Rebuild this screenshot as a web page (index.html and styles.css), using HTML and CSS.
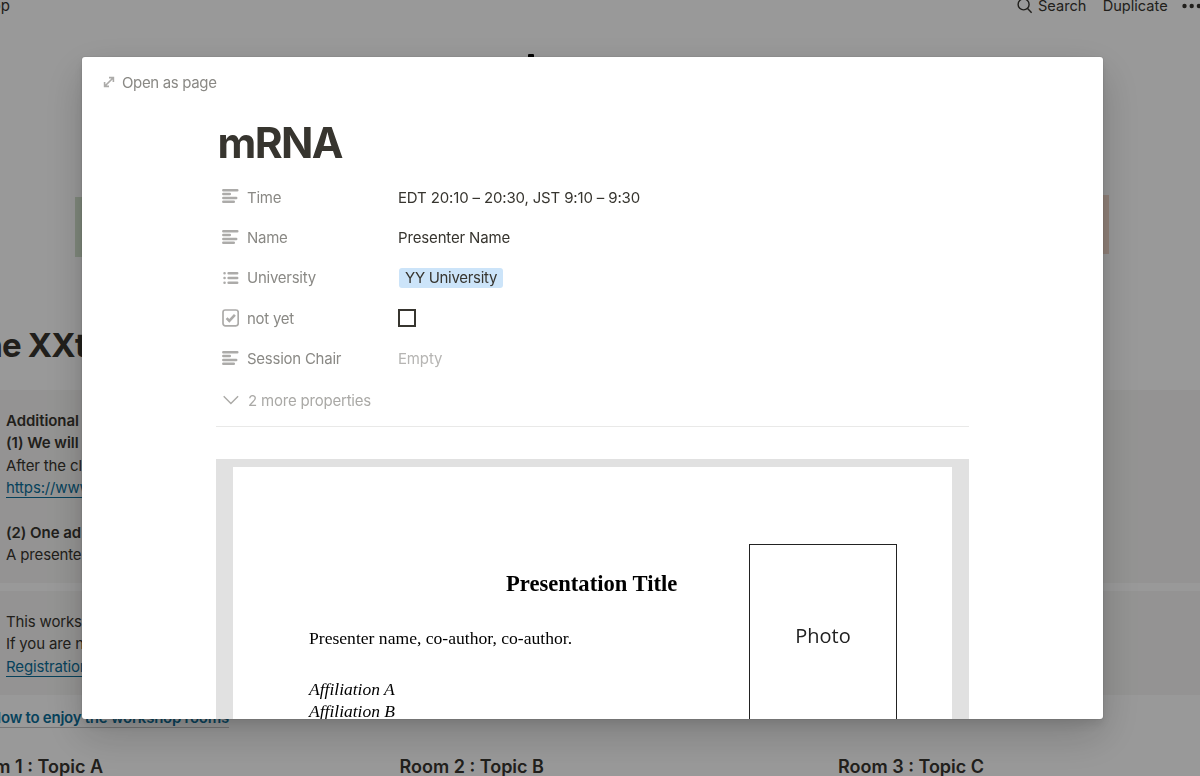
FILE: index.html
```html
<!DOCTYPE html>
<html lang="en">
<head>
    <meta charset="UTF-8">
    <meta name="viewport" content="width=device-width, initial-scale=1.0">
    <title>mRNA</title>
    <link rel="stylesheet" href="styles.css">
</head>
<body>
    <div class="page">
        <header class="topbar">
            <div class="breadcrumb">Workshop</div>
            <nav class="topbar-actions">
                <svg class="search-icon" viewBox="0 0 16 16"><circle cx="6.6" cy="6.4" r="5.5"/><path d="M10.6 10.6L14.6 14.8"/></svg>
                <span class="search-label">Search</span>
                <span class="duplicate-label">Duplicate</span>
                <svg class="more-icon" viewBox="0 0 18 6"><circle cx="2.5" cy="3" r="2.2"/><circle cx="9.7" cy="3" r="2.2"/><circle cx="16.9" cy="3" r="2.2"/></svg>
            </nav>
        </header>

        <div class="banner">
            <span class="banner-mark"></span>
            <div class="banner-green"></div>
            <div class="banner-orange"></div>
        </div>

        <h2 class="page-heading"><span>the XXth</span></h2>

        <section class="callout callout-first">
            <p><b>Additional</b></p>
            <p><b>(1) We will</b></p>
            <p>After the cl</p>
            <p><a>https://www</a></p>
            <p>&nbsp;</p>
            <p><b>(2) One ad</b></p>
            <p>A presenter</p>
        </section>
        <section class="callout">
            <p>This worksh</p>
            <p>If you are n</p>
            <p><a>Registration</a></p>
        </section>

        <div class="guide-link"><a>How to enjoy the workshop rooms</a></div>

        <div class="rooms">
            <h3 class="room-first"><span>Room 1 : Topic A</span></h3>
            <h3 class="room-second">Room 2 : Topic B</h3>
            <h3>Room 3 : Topic C</h3>
        </div>
    </div>

    <div class="overlay">
        <div class="modal">
            <div class="modal-bar">
                <svg class="expand-icon" viewBox="0 0 12 12"><path d="M2.5 9.5L9.5 2.5M6 1.6H10.4V6M1.6 6V10.4H6"/></svg>
                <span>Open as page</span>
            </div>

            <div class="modal-content">
                <h1>mRNA</h1>

                <div class="properties">
                    <div class="property">
                        <svg class="property-icon" viewBox="0 0 18 18"><path d="M2.3 2.3H16.3M2.3 6.1H8.8M2.3 9.9H15.2M2.3 13.7H12.8"/></svg>
                        <span class="property-name">Time</span>
                        <span class="property-value">EDT 20:10 – 20:30, JST 9:10 – 9:30</span>
                    </div>
                    <div class="property">
                        <svg class="property-icon" viewBox="0 0 18 18"><path d="M2.3 2.3H16.3M2.3 6.1H8.8M2.3 9.9H15.2M2.3 13.7H12.8"/></svg>
                        <span class="property-name">Name</span>
                        <span class="property-value">Presenter Name</span>
                    </div>
                    <div class="property">
                        <svg class="property-icon" viewBox="0 0 18 18"><path d="M7.6 4.2H16.2M7.6 9H16.2M7.6 13.8H16.2M3.5 4.2H3.6M3.5 9H3.6M3.5 13.8H3.6"/></svg>
                        <span class="property-name">University</span>
                        <span class="property-value"><span class="tag">YY University</span></span>
                    </div>
                    <div class="property">
                        <svg class="property-icon check-icon" viewBox="0 0 18 18"><rect x="2" y="1" width="15.2" height="15.8" rx="2.3"/><path class="tick" d="M5.6 9.1L8.3 11.8L13.9 5.8"/></svg>
                        <span class="property-name">not yet</span>
                        <span class="property-value"><span class="checkbox"></span></span>
                    </div>
                    <div class="property">
                        <svg class="property-icon" viewBox="0 0 18 18"><path d="M2.3 2.3H16.3M2.3 6.1H8.8M2.3 9.9H15.2M2.3 13.7H12.8"/></svg>
                        <span class="property-name">Session Chair</span>
                        <span class="property-value empty">Empty</span>
                    </div>
                    <div class="more-properties">
                        <svg class="chevron-icon" viewBox="0 0 18 18"><path d="M2.7 5.2L9.9 12.5L17.1 5.2"/></svg>
                        <span>2 more properties</span>
                    </div>
                </div>

                <!-- Embedded abstract document -->
                <div class="document">
                    <div class="sheet">
                        <div class="abstract">
                            <h2>Presentation Title</h2>
                            <p class="authors">Presenter name, co-author, co-author.</p>
                            <p class="affiliation">Affiliation A</p>
                            <p class="affiliation">Affiliation B</p>
                        </div>
                        <div class="photo">Photo</div>
                    </div>
                </div>
            </div>
        </div>
    </div>
</body>
</html>
```
FILE: styles.css
```css
:root {
    --text: #37352f;
    --label: #8a8985;
    --icon: #acaba9;
    --link: #0b6e99;
}

* {
    box-sizing: border-box;
}

body {
    margin: 0;
    font-family: Inter, "Liberation Sans", sans-serif;
    font-size: 15px;
    letter-spacing: -0.15px;
    color: var(--text);
    background-color: #fff;
    overflow: hidden;
}

h1, h2, h3, p {
    margin: 0;
}

svg {
    flex: none;
    fill: none;
    stroke: currentColor;
}

/* Page behind the modal */
.page {
    height: 776px;
    overflow: hidden;
    white-space: nowrap;
}

.topbar {
    display: flex;
    justify-content: space-between;
    align-items: center;
    height: 11px;
    letter-spacing: 0;
}

.breadcrumb {
    display: flex;
    justify-content: flex-end;
    width: 10px;
}

.topbar-actions {
    display: flex;
    align-items: center;
    width: 183px;
    font-size: 14.6px;
}

.search-icon {
    width: 16px;
    height: 16px;
    stroke-width: 1.4;
}

.search-label {
    width: 66px;
    margin-left: 5px;
}

.duplicate-label {
    width: 81px;
}

.more-icon {
    width: 18px;
    height: 6px;
    fill: currentColor;
    stroke: none;
}

.banner {
    display: flex;
    justify-content: space-between;
    align-items: flex-start;
    position: relative;
    height: 312px;
    padding: 184px 91px 0 75px;
}

.banner-mark {
    position: absolute;
    left: 528px;
    top: 43px;
    width: 6px;
    height: 8px;
    border-radius: 1px;
    background-color: #000;
}

.banner-green,
.banner-orange {
    width: 200px;
    height: 59px;
}

.banner-green {
    height: 60px;
    margin-top: 2px;
    background-color: #d5e4cf;
}

.banner-orange {
    background-color: #f3d9cb;
}

.page-heading {
    display: flex;
    justify-content: flex-end;
    width: 106px;
    height: 67px;
    font-size: 33px;
    line-height: 44px;
    letter-spacing: -0.8px;
}

.callout {
    height: 104px;
    padding: 20px 6px 0 6px;
    background-color: #f7f6f5;
    line-height: 22.4px;
}

.callout-first {
    height: 193px;
    margin-bottom: 8px;
}

.callout b {
    font-weight: 600;
    letter-spacing: -0.05px;
}

.page a {
    color: var(--link);
    border-bottom: 1px solid var(--link);
}

.guide-link {
    display: flex;
    justify-content: flex-end;
    width: 229px;
    height: 56px;
    padding-top: 13px;
    font-weight: 600;
    line-height: 20px;
    letter-spacing: -0.25px;
}

.page .guide-link a {
    height: 20px;
    border-color: #c4c4c4;
}

.rooms {
    display: flex;
    font-size: 18px;
    line-height: 32px;
    letter-spacing: 0;
}

.rooms h3 {
    font-size: inherit;
    font-weight: 600;
}

.room-first {
    display: flex;
    justify-content: flex-end;
    width: 103px;
    margin-right: 296.5px;
}

.room-second {
    width: 438.5px;
}

/* Modal */
.overlay {
    position: fixed;
    inset: 0;
    padding: 57px 97px 57px 82px;
    background-color: rgba(0, 0, 0, 0.4);
}

.modal {
    height: 100%;
    overflow: hidden;
    border-radius: 3px;
    background-color: #fff;
    box-shadow: 0 0 0 1px rgba(15, 15, 15, 0.05), 0 5px 10px rgba(15, 15, 15, 0.1), 0 16px 42px rgba(15, 15, 15, 0.2);
}

.modal-bar {
    display: flex;
    align-items: center;
    gap: 7.5px;
    height: 50px;
    padding-left: 20.5px;
    color: var(--label);
    letter-spacing: -0.35px;
}

.expand-icon {
    width: 12px;
    height: 12px;
    color: var(--icon);
    stroke-width: 1.6;
}

.modal-content {
    padding: 9px 134px 0;
}

.modal h1 {
    padding-left: 1.5px;
    font-size: 42.5px;
    font-weight: 700;
    line-height: 54px;
    letter-spacing: -1.6px;
}

.properties {
    padding: 7px 0 0 5px;
}

.property {
    display: flex;
    align-items: center;
    height: 40.4px;
}

.property-icon {
    width: 18px;
    height: 18px;
    color: var(--icon);
    stroke-width: 2.5;
    stroke-linecap: round;
}

.check-icon {
    stroke-width: 1.7;
}

.tick {
    stroke-width: 2.6;
    stroke-linecap: butt;
}

.property-name {
    width: 151px;
    margin-left: 8px;
    color: var(--label);
    letter-spacing: -0.25px;
}

.tag {
    display: block;
    height: 20px;
    margin-left: 1px;
    padding: 0 6px;
    border-radius: 3px;
    background-color: #cce4f9;
    line-height: 20px;
    letter-spacing: -0.3px;
}

.checkbox {
    display: block;
    width: 18px;
    height: 18px;
    border: 2px solid var(--text);
}

.empty {
    color: #b6b5b3;
}

.more-properties {
    display: flex;
    align-items: center;
    gap: 9px;
    height: 48px;
    margin-left: -5px;
    padding: 0 0 4px 5px;
    border-bottom: 1px solid #e9e9e8;
    color: #aaa9a6;
    letter-spacing: -0.2px;
}

.chevron-icon {
    width: 18px;
    height: 18px;
    stroke-width: 1.4;
}

.document {
    margin-top: 32px;
    padding: 8px 17px 0;
    background-color: #e1e1e1;
}

.sheet {
    display: flex;
    justify-content: space-between;
    height: 500px;
    padding: 77px 55px 0 76px;
    background-color: #fff;
    font-family: "Liberation Serif", serif;
    letter-spacing: 0;
    color: #000;
}

.abstract h2 {
    padding: 26px 0 0 197px;
    font-size: 22.6px;
    line-height: 28px;
    white-space: nowrap;
}

.authors {
    padding: 29px 0 29px;
    font-size: 17.6px;
    line-height: 22px;
}

.affiliation {
    font-size: 17.5px;
    font-style: italic;
    line-height: 22px;
}

.photo {
    width: 148px;
    height: 200px;
    padding-top: 78px;
    border: 1px solid #222;
    font-family: "Open Sans", sans-serif;
    font-size: 20px;
    line-height: 26px;
    text-align: center;
    color: #222;
}
```
